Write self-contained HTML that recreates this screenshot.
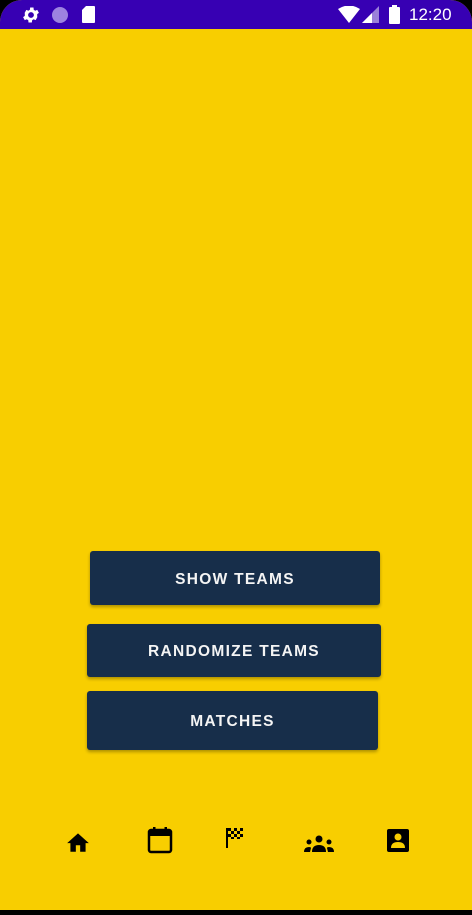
<!DOCTYPE html>
<html><head><style>
html,body{margin:0;padding:0;width:472px;height:915px;overflow:hidden;background:#000}
.scr{position:absolute;left:0;top:0;width:472px;height:910px;background:#f8ce00;border-radius:22px 22px 0 0;overflow:hidden}
.sb{position:absolute;left:0;top:0;width:472px;height:29px;background:#3700b3}
.btn{position:absolute;background:#172e4a;color:#f4f4f4;font-family:"Liberation Sans",sans-serif;font-weight:bold;font-size:15.5px;letter-spacing:1.3px;display:flex;align-items:center;justify-content:center;border-radius:3px;box-shadow:0 2px 3px rgba(0,0,0,.3);padding-top:3px;box-sizing:border-box}
.t{position:absolute;color:#fff;font-family:"Liberation Sans",sans-serif;font-size:17px;top:5px;left:409px}
svg{position:absolute}
</style></head><body>
<div class="scr">
<div class="sb">
<svg style="left:21px;top:5px" width="20" height="20" viewBox="0 0 24 24"><path fill="#fff" d="M19.4 13a7.5 7.5 0 000-2l2.1-1.6-2-3.5-2.5 1a7 7 0 00-1.7-1L15 3h-4l-.4 2.9a7 7 0 00-1.7 1l-2.5-1-2 3.5L4.6 11a7.5 7.5 0 000 2l-2.1 1.6 2 3.5 2.5-1a7 7 0 001.7 1L9 21h4l.4-2.9a7 7 0 001.7-1l2.5 1 2-3.5zM12 15.5a3.5 3.5 0 110-7 3.5 3.5 0 010 7z"/></svg>
<svg style="left:51px;top:6px" width="18" height="18"><circle cx="9" cy="9" r="8" fill="#9d82e0"/></svg>
<svg style="left:81px;top:5px" width="15" height="19" viewBox="0 0 15 19"><path fill="#fff" d="M5 1h8a1 1 0 011 1v15a1 1 0 01-1 1H2a1 1 0 01-1-1V5z"/></svg>
<svg style="left:338px;top:6px" width="22" height="17" viewBox="0 0 22 17"><path fill="#fff" d="M0 3Q11-4 22 3L11 17z"/></svg>
<svg style="left:362px;top:6px" width="17" height="17"><path fill="#fff" d="M17 0V17H0z" opacity=".5"/><path fill="#fff" d="M10 7V17H0z"/></svg>
<svg style="left:389px;top:5px" width="11" height="19"><rect x="0" y="2" width="11" height="17" rx="1" fill="#fff"/><rect x="3" y="0" width="5" height="3" fill="#fff"/></svg>
<div class="t">12:20</div>
</div>
<div class="btn" style="left:90px;top:551px;width:290px;height:54px">SHOW TEAMS</div>
<div class="btn" style="left:87px;top:624px;width:294px;height:53px">RANDOMIZE TEAMS</div>
<div class="btn" style="left:87px;top:691px;width:291px;height:59px">MATCHES</div>
<svg style="left:65px;top:830px" width="26" height="24" viewBox="0 0 24 22"><path d="M10 20v-6h4v6h5v-8h3L12 3 2 12h3v8z"/></svg>
<svg style="left:147px;top:826px" width="26" height="29" viewBox="0 0 26 29"><rect x="2" y="4" width="22" height="22" rx="2" fill="none" stroke="#000" stroke-width="2.5"/><rect x="2" y="4" width="22" height="6" fill="#000"/><rect x="6" y="1" width="2.5" height="5"/><rect x="17.5" y="1" width="2.5" height="5"/></svg>
<svg style="left:226px;top:828px" width="19" height="20" viewBox="0 0 19 20"><rect x="0" y="0" width="2" height="20"/><g fill="#000"><rect x="2" y="0" width="3" height="3"/><rect x="8" y="0" width="3" height="3"/><rect x="14" y="0" width="3" height="3"/><rect x="5" y="3" width="3" height="3"/><rect x="11" y="3" width="3" height="3"/><rect x="2" y="6" width="3" height="3"/><rect x="8" y="6" width="3" height="3"/><rect x="14" y="6" width="3" height="3"/><rect x="5" y="9" width="3" height="2"/><rect x="11" y="9" width="3" height="2"/></g></svg>
<svg style="left:304px;top:835px" width="30" height="17" viewBox="0 0 30 17"><circle cx="15" cy="4" r="3.5"/><circle cx="5" cy="7" r="2.5"/><circle cx="25" cy="7" r="2.5"/><path d="M8 17q0-7 7-7t7 7z"/><path d="M0 17q0-5 5-5 2 0 2 1l-1 4z"/><path d="M30 17q0-5-5-5-2 0-2 1l1 4z"/></svg>
<svg style="left:387px;top:829px" width="22" height="23" viewBox="0 0 22 23"><rect x="0" y="0" width="22" height="23" rx="2"/><circle cx="11" cy="8" r="3.5" fill="#f8ce00"/><path d="M4 19q0-6 7-6t7 6z" fill="#f8ce00"/></svg>
</div>
</body></html>
